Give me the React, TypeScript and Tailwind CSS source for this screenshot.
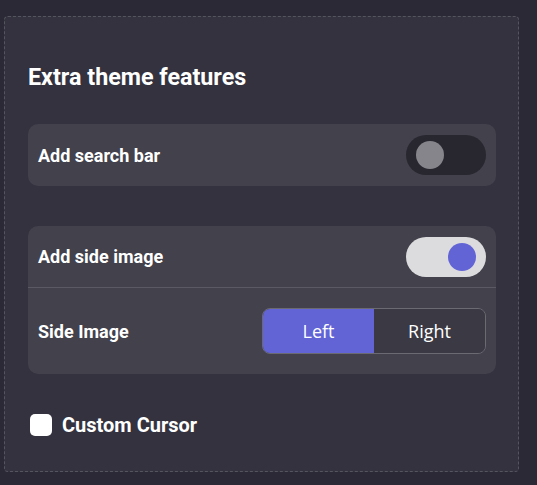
import { useState } from 'react'

function Toggle({ on, onClick }: { on: boolean; onClick: () => void }) {
  return (
    <button
      onClick={onClick}
      className={`flex h-[40px] w-[80px] items-center rounded-full px-[10px] ${
        on ? 'justify-end bg-[#dcdcde]' : 'justify-start bg-[#28272f]'
      }`}
    >
      <span
        className={`block h-[28px] w-[28px] rounded-full ${
          on ? 'bg-[#6264d6]' : 'bg-[#86858c]'
        }`}
      />
    </button>
  )
}

export default function App() {
  const [searchBar, setSearchBar] = useState(false)
  const [sideImage, setSideImage] = useState(true)
  const [side, setSide] = useState<'left' | 'right'>('left')

  return (
    <div
      className="h-[485px] w-[537px] bg-[#2a2935] pl-[4px] pt-[16px]"
      style={{ fontFamily: 'Roboto, "Liberation Sans", sans-serif' }}
    >
      <div className="flex h-[456px] w-[515px] flex-col rounded-[4px] border border-dashed border-[#55555f] bg-[#33323e] pl-[23px] pr-[22px] pt-[46px]">
        <h2 className="text-[23.3px] font-bold leading-[28px] text-white">
          Extra theme features
        </h2>

        {/* search bar */}
        <div className="mt-[33px] flex h-[62px] items-center justify-between rounded-[10px] bg-[#42414c] pl-[10px] pr-[10px]">
          <span className="text-[18px] font-bold text-white">Add search bar</span>
          <Toggle on={searchBar} onClick={() => setSearchBar(!searchBar)} />
        </div>

        {/* side image */}
        <div className="mt-[40px] flex flex-col rounded-[10px] bg-[#42414c]">
          <div className="flex h-[62px] items-center justify-between border-b border-[#5b5a64] px-[10px]">
            <span className="text-[18px] font-bold text-white">Add side image</span>
            <Toggle on={sideImage} onClick={() => setSideImage(!sideImage)} />
          </div>
          <div className="flex h-[86px] items-center justify-between px-[10px]">
            <span className="text-[18px] font-bold text-white">Side Image</span>
            <div
              className="flex h-[46px] w-[224px] overflow-hidden rounded-[8px] border border-[#6b6a73] text-[18px] text-white"
              style={{ fontFamily: '"Open Sans", "Noto Sans", sans-serif' }}
            >
              <button
                onClick={() => setSide('left')}
                className={`flex-1 ${side === 'left' ? 'bg-[#6264d6]' : 'bg-[#3a3944]'}`}
              >
                Left
              </button>
              <button
                onClick={() => setSide('right')}
                className={`flex-1 ${side === 'right' ? 'bg-[#6264d6]' : 'bg-[#3a3944]'}`}
              >
                Right
              </button>
            </div>
          </div>
        </div>

        {/* cursor */}
        <label className="mt-[37px] flex items-center gap-[10px] pl-[2px]">
          <span className="block h-[22px] w-[22px] rounded-[5px] bg-white" />
          <span className="text-[20px] font-bold leading-[28px] text-white">Custom Cursor</span>
        </label>
      </div>
    </div>
  )
}
